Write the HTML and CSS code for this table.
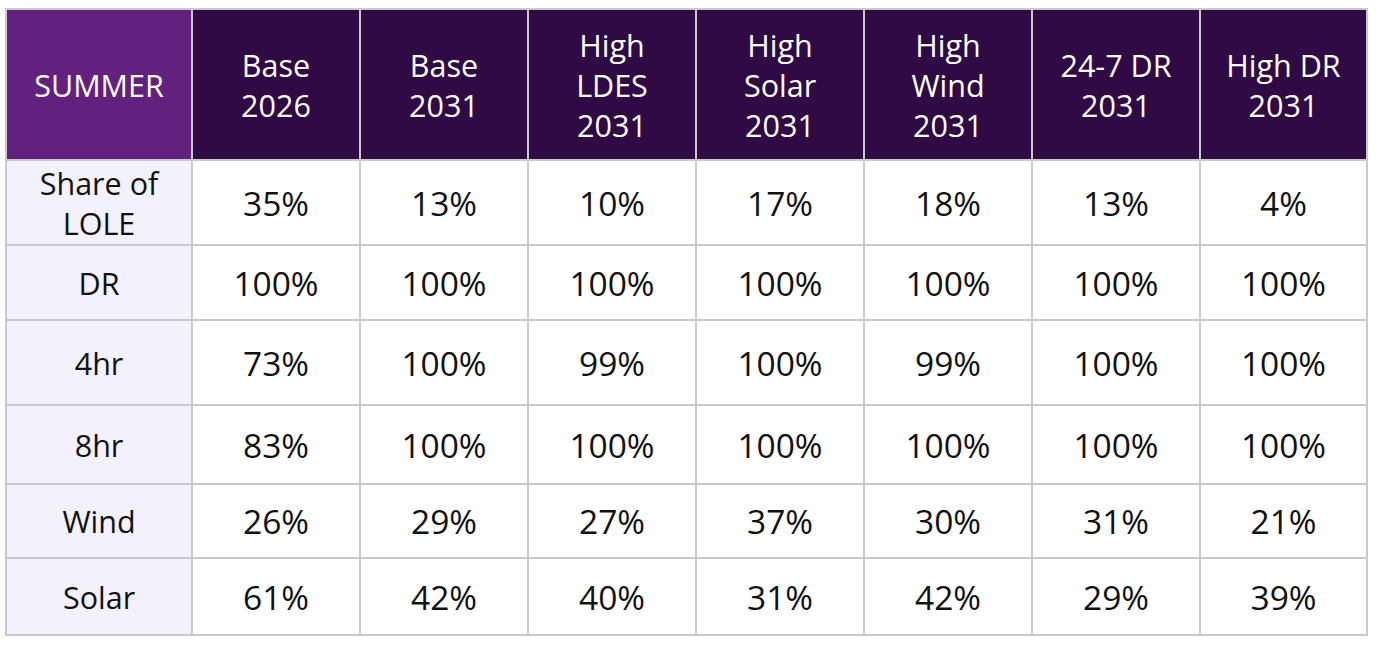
FILE: index.html
```html
<!DOCTYPE html>
<html lang="en">
<head>
<meta charset="utf-8">
<title>Summer</title>
<link rel="stylesheet" href="styles.css">
</head>
<body>
<div class="grid">
  <div class="cell corner">SUMMER</div>
  <div class="cell head">Base<br>2026</div>
  <div class="cell head">Base<br>2031</div>
  <div class="cell head">High<br>LDES<br>2031</div>
  <div class="cell head">High<br>Solar<br>2031</div>
  <div class="cell head">High<br>Wind<br>2031</div>
  <div class="cell head">24-7 DR<br>2031</div>
  <div class="cell head">High DR<br>2031</div>

  <div class="cell label">Share of<br>LOLE</div>
  <div class="cell val">35%</div><div class="cell val">13%</div><div class="cell val">10%</div><div class="cell val">17%</div><div class="cell val">18%</div><div class="cell val">13%</div><div class="cell val">4%</div>

  <div class="cell label">DR</div>
  <div class="cell val">100%</div><div class="cell val">100%</div><div class="cell val">100%</div><div class="cell val">100%</div><div class="cell val">100%</div><div class="cell val">100%</div><div class="cell val">100%</div>

  <div class="cell label">4hr</div>
  <div class="cell val">73%</div><div class="cell val">100%</div><div class="cell val">99%</div><div class="cell val">100%</div><div class="cell val">99%</div><div class="cell val">100%</div><div class="cell val">100%</div>

  <div class="cell label">8hr</div>
  <div class="cell val">83%</div><div class="cell val">100%</div><div class="cell val">100%</div><div class="cell val">100%</div><div class="cell val">100%</div><div class="cell val">100%</div><div class="cell val">100%</div>

  <div class="cell label">Wind</div>
  <div class="cell val">26%</div><div class="cell val">29%</div><div class="cell val">27%</div><div class="cell val">37%</div><div class="cell val">30%</div><div class="cell val">31%</div><div class="cell val">21%</div>

  <div class="cell label">Solar</div>
  <div class="cell val">61%</div><div class="cell val">42%</div><div class="cell val">40%</div><div class="cell val">31%</div><div class="cell val">42%</div><div class="cell val">29%</div><div class="cell val">39%</div>
</div>
</body>
</html>
```
FILE: styles.css
```css
html, body {
  margin: 0;
  padding: 0;
  background: #ffffff;
}
body {
  font-family: "Open Sans", "Noto Sans", sans-serif;
}
.grid {
  display: grid;
  grid-template-columns: 184px repeat(6, 166px) 165px;
  grid-template-rows: 149px 83px 73px 83px 77px 72px 75px;
  gap: 2px;
  padding: 2px;
  background: #c9c9c9;
  width: max-content;
  margin: 8px 0 0 5px;
}
.cell {
  display: flex;
  align-items: center;
  justify-content: center;
  text-align: center;
  line-height: 40px;
  font-size: 30.5px;
}
.corner {
  background: #62207f;
  color: #ffffff;
}
.head {
  background: #2f0a45;
  color: #ffffff;
}
.label {
  background: #f3f1fd;
  color: #111111;
}
.val {
  background: #ffffff;
  color: #111111;
  font-size: 33.5px;
}
```
